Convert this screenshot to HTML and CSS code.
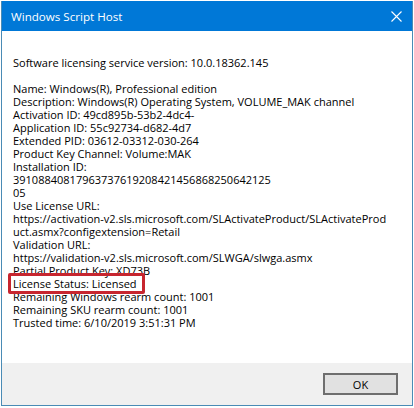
FILE: index.html
```html
<!DOCTYPE html>
<html>
<head>
<meta charset="utf-8">
<link rel="stylesheet" href="styles.css">
</head>
<body>
<div class="window">
  <div class="titlebar">
    <span class="title">Windows Script Host</span>
    <svg class="close" width="11" height="11" viewBox="0 0 11 11"><path d="M0.5 0.5 L10.5 10.5 M10.5 0.5 L0.5 10.5" stroke="#ffffff" stroke-width="1.1" fill="none"/></svg>
  </div>
  <div class="content">
    <div class="line">Software licensing service version: 10.0.18362.145</div>
    <div class="line">&nbsp;</div>
    <div class="line">Name: Windows(R), Professional edition</div>
    <div class="line">Description: Windows(R) Operating System, VOLUME_MAK channel</div>
    <div class="line">Activation ID: 49cd895b-53b2-4dc4-</div>
    <div class="line">Application ID: 55c92734-d682-4d7</div>
    <div class="line">Extended PID: 03612-03312-030-264</div>
    <div class="line">Product Key Channel: Volume:MAK</div>
    <div class="line">Installation ID:</div>
    <div class="line">39108840817963737619208421456868250642125</div>
    <div class="line">05</div>
    <div class="line">Use License URL:</div>
    <div class="line">https://activation-v2.sls.microsoft.com/SLActivateProduct/SLActivateProd</div>
    <div class="line">uct.asmx?configextension=Retail</div>
    <div class="line">Validation URL:</div>
    <div class="line">https://validation-v2.sls.microsoft.com/SLWGA/slwga.asmx</div>
    <div class="line">Partial Product Key: XD73B</div>
    <div class="line"><span class="highlight">License Status: Licensed</span></div>
    <div class="line">Remaining Windows rearm count: 1001</div>
    <div class="line">Remaining SKU rearm count: 1001</div>
    <div class="line">Trusted time: 6/10/2019 3:51:31 PM</div>
  </div>
  <div class="footer">
    <button class="ok">OK</button>
  </div>
</div>
</body>
</html>
```

FILE: styles.css
```css
html, body {
  margin: 0;
  padding: 0;
  background: #ffffff;
}
body {
  width: 414px;
  height: 408px;
  overflow: hidden;
}
.window {
  margin: 1px 0 0 1px;
  width: 410px;
  height: 404px;
  border: 1px solid #4a8bb5;
  border-top: none;
  display: flex;
  flex-direction: column;
  font-family: "Open Sans", "Noto Sans", sans-serif;
  color: #000000;
}
.titlebar {
  height: 30px;
  background: #0078d7;
  display: flex;
  align-items: center;
  justify-content: space-between;
  padding: 0 10px 0 9px;
  flex-shrink: 0;
}
.title {
  color: #ffffff;
  font-size: 11.6px;
}
.close {
  display: block;
}
.content {
  flex: 1;
  background: #ffffff;
  padding: 25px 0 0 11px;
  font-size: 11px;
  line-height: 13px;
}
.line {
  white-space: nowrap;
  height: 13px;
}
.highlight {
  position: relative;
}
.highlight::after {
  content: "";
  position: absolute;
  left: -5px;
  right: -8px;
  top: -3px;
  bottom: -3px;
  border: 3px solid #c7262f;
  border-radius: 2px;
}
.footer {
  height: 42px;
  background: #f0f0f0;
  display: flex;
  justify-content: flex-end;
  align-items: flex-start;
  padding: 10px 14px 0 0;
  box-sizing: border-box;
  flex-shrink: 0;
}
.ok {
  width: 75px;
  height: 22px;
  background: #e1e1e1;
  border: 2px solid #6e6e6e;
  font-family: "Open Sans", "Noto Sans", sans-serif;
  font-size: 11px;
  color: #000000;
  padding: 0;
}
```
